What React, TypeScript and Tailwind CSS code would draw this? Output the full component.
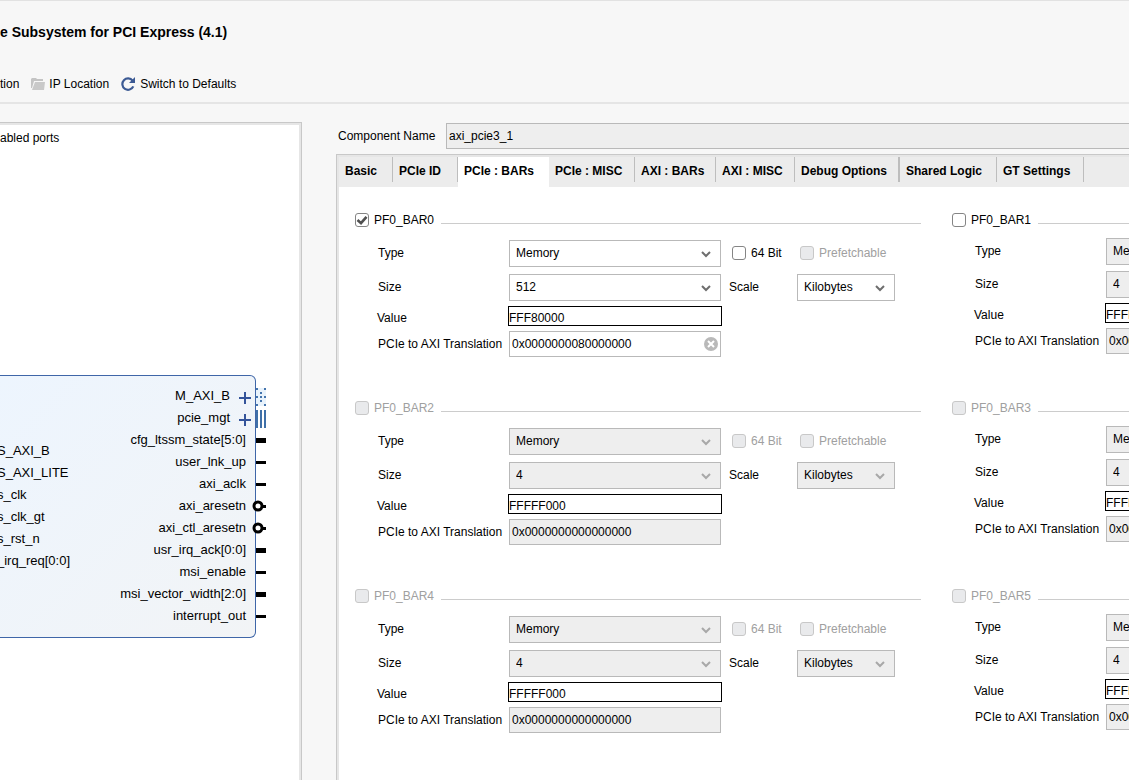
import { useState } from "react";

const TABS = [
  { name: "Basic", className: "w-[54px]" },
  { name: "PCIe ID", className: "w-[65px]" },
  { name: "PCIe : BARs", className: "w-[91px]" },
  { name: "PCIe : MISC", className: "w-[86px]" },
  { name: "AXI : BARs", className: "w-[81px]" },
  { name: "AXI : MISC", className: "w-[79px]" },
  { name: "Debug Options", className: "w-[105px] border-r-2" },
  { name: "Shared Logic", className: "w-[97px]" },
  { name: "GT Settings", className: "w-[87px]" },
];

const LEFT_PORTS = ["S_AXI_B", "S_AXI_LITE", "s_clk", "s_clk_gt", "s_rst_n", "_irq_req[0:0]"];

type PinKind = "master" | "bus" | "wide" | "wire" | "reset";

const RIGHT_PORTS: { name: string; pin: PinKind }[] = [
  { name: "M_AXI_B", pin: "master" },
  { name: "pcie_mgt", pin: "bus" },
  { name: "cfg_ltssm_state[5:0]", pin: "wide" },
  { name: "user_lnk_up", pin: "wire" },
  { name: "axi_aclk", pin: "wire" },
  { name: "axi_aresetn", pin: "reset" },
  { name: "axi_ctl_aresetn", pin: "reset" },
  { name: "usr_irq_ack[0:0]", pin: "wide" },
  { name: "msi_enable", pin: "wire" },
  { name: "msi_vector_width[2:0]", pin: "wide" },
  { name: "interrupt_out", pin: "wire" },
];

type Bar = {
  name: string;
  size: string;
  value: string;
  translation: string;
  checked?: boolean;
  available?: boolean;
};

const EMPTY = { size: "4", value: "FFFFF000", translation: "0x0000000000000000" };

const BARS: Bar[] = [
  {
    name: "PF0_BAR0",
    size: "512",
    value: "FFF80000",
    translation: "0x0000000080000000",
    checked: true,
    available: true,
  },
  { name: "PF0_BAR1", ...EMPTY, available: true },
  { name: "PF0_BAR2", ...EMPTY },
  { name: "PF0_BAR3", ...EMPTY },
  { name: "PF0_BAR4", ...EMPTY },
  { name: "PF0_BAR5", ...EMPTY },
];

const Pin = ({ kind }: { kind: PinKind }) => (
  <svg width="10" height="22" viewBox="0 0 10 22" className="block overflow-visible">
    {kind === "master" && (
      <g shapeRendering="crispEdges">
        <rect x="0" y="4" width="10" height="18" fill="#e9f3fc" />
        <path
          d="M0 5h2M8 5h2M0 13h2M8 13h2M0 21h2M8 21h2M4 9h2M4 13h2M4 17h2"
          stroke="#4474ad"
          strokeWidth="2"
        />
      </g>
    )}
    {kind === "bus" && (
      <path
        d="M1 4v18M5 4v18M9 4v18"
        stroke="#3f70a8"
        strokeWidth="2"
        shapeRendering="crispEdges"
      />
    )}
    {kind === "wide" && <rect x="0" y="10" width="10" height="5" />}
    {kind === "wire" && <rect x="0" y="11" width="10" height="3" />}
    {kind === "reset" && (
      <g>
        <circle cx="2" cy="12" r="4" fill="#fff" stroke="#000" strokeWidth="3" />
        <rect x="6" y="11" width="4" height="3" />
      </g>
    )}
  </svg>
);

const BlockDiagram = () => (
  <div className="flex text-[13px] leading-[22px]">
    <div className="flex w-64 items-center justify-between rounded-r-[6px] border border-l-0 border-[#3f66a8] bg-linear-to-br from-[#edf5fe] to-[#f2f4f6] pt-[9px] pb-[10px]">
      <ul className="-ml-[3px]">
        {LEFT_PORTS.map((name) => (
          <li key={name}>{name}</li>
        ))}
      </ul>
      <ul>
        {RIGHT_PORTS.map(({ name, pin }) => {
          const expandable = pin === "master" || pin === "bus";
          return (
            <li key={name} className="flex h-[22px] justify-end">
              {name}
              {expandable ? (
                <svg width="25" height="22" viewBox="0 0 25 22">
                  <path
                    d="M9 13h12M15 7v12"
                    stroke="#34549a"
                    strokeWidth="2"
                    shapeRendering="crispEdges"
                  />
                </svg>
              ) : (
                <span className="w-[9px]" />
              )}
            </li>
          );
        })}
      </ul>
    </div>
    <div className="pt-[9px]">
      {RIGHT_PORTS.map(({ name, pin }) => (
        <Pin key={name} kind={pin} />
      ))}
    </div>
  </div>
);

const CheckBox = ({
  label,
  checked = false,
  disabled = false,
}: {
  label: string;
  checked?: boolean;
  disabled?: boolean;
}) => {
  const [on, setOn] = useState(checked);

  return (
    <label className={`flex items-center gap-[5px] ${disabled ? "text-[#a0a0a0]" : ""}`}>
      <span className="relative block size-[14px]">
        <input
          type="checkbox"
          checked={on}
          disabled={disabled}
          onChange={(e) => setOn(e.target.checked)}
          className="block size-[14px] appearance-none rounded-[3px] border border-[#858585] bg-white disabled:border-[#c8c8c8] disabled:bg-[#e9eaec]"
        />
        {on && (
          <svg
            width="14"
            height="14"
            viewBox="0 0 14 14"
            className="pointer-events-none absolute inset-0"
          >
            <path d="M2.5 7l3.5 3.2 5.5-6.4" fill="none" stroke="#505050" strokeWidth="2.6" />
          </svg>
        )}
      </span>
      {label}
    </label>
  );
};

const Select = ({
  id,
  value,
  disabled,
  className,
}: {
  id: string;
  value: string;
  disabled: boolean;
  className: string;
}) => (
  <div className={`relative shrink-0 ${className}`}>
    <select
      id={id}
      disabled={disabled}
      className="block h-[27px] w-full appearance-none border border-[#b9b9b9] bg-white pb-[2px] pl-[6px] text-black opacity-100 disabled:bg-[#eeeeee]"
    >
      <option>{value}</option>
    </select>
    <svg
      width="10"
      height="7"
      viewBox="0 0 10 7"
      className="pointer-events-none absolute top-[11px] right-[10px]"
    >
      <path
        d="M1 1l4 4 4-4"
        fill="none"
        stroke={disabled ? "#a8a8a8" : "#6e6e6e"}
        strokeWidth="2"
      />
    </svg>
  </div>
);

const BarGroup = ({ bar, compact }: { bar: Bar; compact: boolean }) => {
  const { name, size, value, translation, checked = false, available = false } = bar;
  const off = !checked;

  return (
    <section className="h-[188px]">
      <div className="flex h-4 items-center">
        <CheckBox label={name} checked={checked} disabled={!available} />
        <div className="mt-[6px] ml-[7px] h-px flex-1 bg-[#cccccc]" />
      </div>
      <div className={compact ? "pt-[10px]" : "pt-3"}>
        <div className={`flex items-center pl-[23px] ${compact ? "mb-[6px]" : "mb-[7px]"}`}>
          <label htmlFor={`${name}-type`} className="w-[131px] pb-[2px]">
            Type
          </label>
          <Select id={`${name}-type`} value="Memory" disabled={off} className="w-[212px]" />
          <div className="ml-[11px] w-[68px] pb-[2px]">
            <CheckBox label="64 Bit" disabled={off} />
          </div>
          <div className="pb-[2px]">
            <CheckBox label="Prefetchable" disabled />
          </div>
        </div>
        <div className="mb-[5px] flex items-center pl-[23px]">
          <label htmlFor={`${name}-size`} className="w-[131px] pb-[2px]">
            Size
          </label>
          <Select id={`${name}-size`} value={size} disabled={off} className="w-[212px]" />
          <label htmlFor={`${name}-scale`} className="ml-2 w-[68px] pb-[2px]">
            Scale
          </label>
          <Select id={`${name}-scale`} value="Kilobytes" disabled={off} className="w-[98px]" />
        </div>
        <div className="mb-[5px] flex items-center pl-[22px]">
          <label htmlFor={`${name}-value`} className="w-[131px] pt-[3px]">
            Value
          </label>
          <input
            id={`${name}-value`}
            readOnly
            value={value}
            className="h-5 w-[214px] border border-black bg-white pt-[3px]"
          />
        </div>
        <div className="flex items-center pl-[23px]">
          <label htmlFor={`${name}-translation`} className="w-[131px] whitespace-nowrap">
            PCIe to AXI Translation
          </label>
          <div className="relative w-[212px]">
            <input
              id={`${name}-translation`}
              defaultValue={translation}
              disabled={off}
              className="block h-[26px] w-full border border-[#b9b9b9] bg-white pl-[2px] disabled:bg-[#eeeeee]"
            />
            {checked && (
              <button aria-label="Clear" className="absolute top-[6px] right-[3px]">
                <svg width="14" height="14" viewBox="0 0 14 14" className="block">
                  <circle cx="7" cy="7" r="7" fill="#b9b9b9" />
                  <path d="M4 4l6 6M10 4l-6 6" stroke="#fff" strokeWidth="2" />
                </svg>
              </button>
            )}
          </div>
        </div>
      </div>
    </section>
  );
};

const Toolbar = () => (
  <nav className="flex h-5 items-center">
    <button>tion</button>
    <button className="ml-3 flex items-center gap-1">
      <svg width="14" height="12" viewBox="0 0 14 12">
        <path d="M0 1l1-1h4l1 1h6v2H3L1 10H0z" fill="#c4c4c4" />
        <path d="M4 4h10l-1 8H1z" fill="#c9c9c9" />
      </svg>
      IP Location
    </button>
    <button className="ml-3 flex items-center gap-[5px]">
      <svg width="14" height="14" viewBox="0 0 14 14">
        <path
          d="M11.6 3.6A5.7 5.7 0 1 0 12.3 9.4"
          fill="none"
          stroke="#3c5a94"
          strokeWidth="2.2"
        />
        <path d="M14 0v6H8z" fill="#3c5a94" />
      </svg>
      Switch to Defaults
    </button>
  </nav>
);

export default function App() {
  const [tab, setTab] = useState("PCIe : BARs");

  return (
    <div className="flex min-h-screen flex-col overflow-hidden border-t border-[#e2e2e2] bg-[#f7f7f7] font-['Liberation_Sans',Arial,sans-serif] text-xs text-black">
      <header className="border-b-2 border-[#e5e5e5] pt-[21px] pb-2">
        <h1 className="text-sm font-bold">e Subsystem for PCI Express (4.1)</h1>
        <div className="pt-8">
          <Toolbar />
        </div>
      </header>

      <main className="flex flex-1 pt-[18px]">
        <aside className="flex w-[302px] shrink-0 border-t border-r border-[#c8c8c8]">
          <div className="flex-1 border-t-2 border-r-2 border-[#e6e6e6] bg-white">
            <p className="h-[250px] pt-[5px]">abled ports</p>
            <BlockDiagram />
          </div>
        </aside>

        <div className="ml-[34px] flex min-w-0 flex-1 flex-col">
          <div className="flex items-center pt-px pb-[5px] pl-[2px]">
            <label htmlFor="component-name" className="w-[108px] shrink-0">
              Component Name
            </label>
            <input
              id="component-name"
              readOnly
              value="axi_pcie3_1"
              className="h-[26px] min-w-0 flex-1 border border-r-0 border-[#b9b9b9] bg-[#eeeeee] pl-[2px]"
            />
          </div>

          <div className="flex-1 border-t border-l border-[#c8c8c8]">
            <div className="h-full border-t-2 border-l-2 border-[#e6e6e6] bg-white">
              <div role="tablist" className="flex h-[30px] items-start bg-[#ececec]">
                {TABS.map(({ name, className }) => (
                  <button
                    key={name}
                    role="tab"
                    aria-selected={tab === name}
                    onClick={() => setTab(name)}
                    className={`shrink-0 border-r pl-[6px] text-left font-bold whitespace-nowrap ${className} ${
                      tab === name
                        ? "h-[30px] border-white bg-white pb-[3px]"
                        : "h-[25px] border-[#bdbdbd] pt-[2px]"
                    }`}
                  >
                    {name}
                  </button>
                ))}
              </div>
              <div
                role="tabpanel"
                className="grid grid-cols-[566px_566px] gap-x-[31px] overflow-hidden pt-[25px] pl-4"
              >
                {BARS.map((bar, i) => (
                  <BarGroup key={bar.name} bar={bar} compact={i % 2 === 1} />
                ))}
              </div>
            </div>
          </div>
        </div>
      </main>
    </div>
  );
}
